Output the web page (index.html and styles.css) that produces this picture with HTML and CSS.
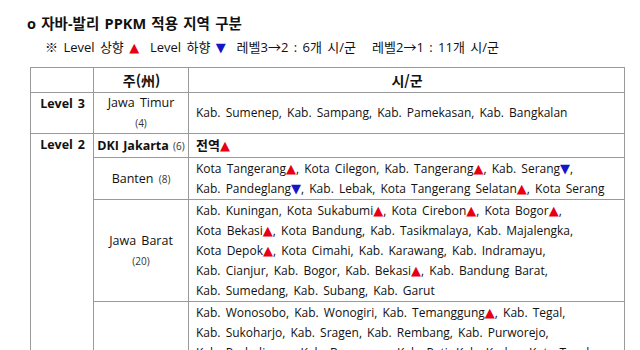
FILE: index.html
```html
<!DOCTYPE html>
<html lang="ko">
<head>
<meta charset="utf-8">
<link rel="stylesheet" href="styles.css">
</head>
<body>
<div class="page">
  <h1 class="title">o 자바-발리 PPKM 적용 지역 구분</h1>
  <p class="legend">※ Level 상향 <span class="up">▲</span>&nbsp; Level 하향 <span class="dn">▼</span>&nbsp; 레벨3→2 : 6개 시/군&nbsp;&nbsp; 레벨2→1 : 11개 시/군</p>
  <table class="grid">
    <colgroup>
      <col class="c-level">
      <col class="c-prov">
      <col class="c-city">
    </colgroup>
    <tr class="head">
      <th></th>
      <th>주(州)</th>
      <th>시/군</th>
    </tr>
    <tr>
      <td class="lvl">Level 3</td>
      <td class="prov">Jawa Timur<br><span class="num">(4)</span></td>
      <td class="city">Kab. Sumenep, Kab. Sampang, Kab. Pamekasan, Kab. Bangkalan</td>
    </tr>
    <tr class="single">
      <td class="lvl" rowspan="4">Level 2</td>
      <td class="prov bold">DKI Jakarta <span class="num">(6)</span></td>
      <td class="city"><b class="ko">전역</b><span class="up">▲</span></td>
    </tr>
    <tr class="multi">
      <td class="prov">Banten <span class="num">(8)</span></td>
      <td class="city">Kota Tangerang<span class="up">▲</span>, Kota Cilegon, Kab. Tangerang<span class="up">▲</span>, Kab. Serang<span class="dn">▼</span>,<br>Kab. Pandeglang<span class="dn">▼</span>, Kab. Lebak, Kota Tangerang Selatan<span class="up">▲</span>, Kota Serang</td>
    </tr>
    <tr class="multi">
      <td class="prov">Jawa Barat<br><span class="num">(20)</span></td>
      <td class="city">Kab. Kuningan, Kota Sukabumi<span class="up">▲</span>, Kota Cirebon<span class="up">▲</span>, Kota Bogor<span class="up">▲</span>,<br>Kota Bekasi<span class="up">▲</span>, Kota Bandung, Kab. Tasikmalaya, Kab. Majalengka,<br>Kota Depok<span class="up">▲</span>, Kota Cimahi, Kab. Karawang, Kab. Indramayu,<br>Kab. Cianjur, Kab. Bogor, Kab. Bekasi<span class="up">▲</span>, Kab. Bandung Barat,<br>Kab. Sumedang, Kab. Subang, Kab. Garut</td>
    </tr>
    <tr class="multi">
      <td class="prov">Jawa Tengah<br><span class="num">(28)</span></td>
      <td class="city">Kab. Wonosobo, Kab. Wonogiri, Kab. Temanggung<span class="up">▲</span>, Kab. Tegal,<br>Kab. Sukoharjo, Kab. Sragen, Kab. Rembang, Kab. Purworejo,<br>Kab. Purbalingga, Kab. Banyumas, Kab. Pati, Kab. Kudus, Kota Tegal,<br>Kab. Klaten, Kab. Karanganyar, Kab. Boyolali, Kab. Demak,<br>Kab. Grobogan, Kab. Kendal, Kota Semarang, Kab. Kebumen,<br>Kota Surakarta, Kota Salatiga, Kota Magelang, Kab. Magelang,<br>Kab. Semarang, Kab. Blora, Kab. Jepara</td>
    </tr>
  </table>
</div>
</body>
</html>
```

FILE: styles.css
```css
html, body {
  margin: 0;
  padding: 0;
  background: #fff;
}
body {
  font-family: "Open Sans", "Noto Sans CJK KR", sans-serif;
  color: #111;
}
.page {
  padding: 12px 0 0 27px;
}
.title {
  margin: 0;
  font-family: "Open Sans", "Noto Sans CJK KR", sans-serif;
  font-size: 14.5px;
  font-weight: 700;
  line-height: 24px;
  word-spacing: 1.5px;
}
.legend {
  margin: 0 0 0 18px;
  font-size: 13px;
  line-height: 22px;
  word-spacing: 2px;
}
.grid {
  margin: 9px 0 0 3px;
  width: 594px;
  border-collapse: collapse;
  table-layout: fixed;
  font-size: 12px;
  word-spacing: 2px;
}
.c-level { width: 63px; }
.c-prov { width: 95px; }
.c-city { width: 436px; }
.grid th, .grid td {
  border: 1px solid #9a9a9a;
  padding: 0 6px 0 7px;
  line-height: 20px;
}
.grid th {
  font-family: "Noto Sans CJK KR", sans-serif;
  font-weight: 700;
  height: 24px;
  text-align: center;
  font-size: 14px;
}
.single td {
  height: 23px;
}
.multi .city {
  padding-top: 1px;
}
.lvl {
  font-weight: 700;
  font-size: 12.5px;
  word-spacing: 1.5px;
  text-align: center;
  vertical-align: top;
  white-space: nowrap;
  padding-top: 1px !important;
}
.prov {
  text-align: center;
  vertical-align: middle;
  white-space: nowrap;
  font-size: 12.5px;
  padding-left: 2px !important;
  padding-right: 2px !important;
}
.prov.bold {
  font-weight: 700;
  word-spacing: 1px;
}
.num {
  font-size: 10px;
  font-weight: 400;
  color: #333;
}
.city {
  vertical-align: middle;
  white-space: nowrap;
}
.ko {
  font-family: "Noto Sans CJK KR", sans-serif;
  font-size: 13px;
}
.up, .dn {
  font-family: "DejaVu Sans", sans-serif;
  font-size: 13px;
  line-height: 0;
  word-spacing: 0;
}
.up { color: #e60012; }
.dn { color: #1414c8; }
```
